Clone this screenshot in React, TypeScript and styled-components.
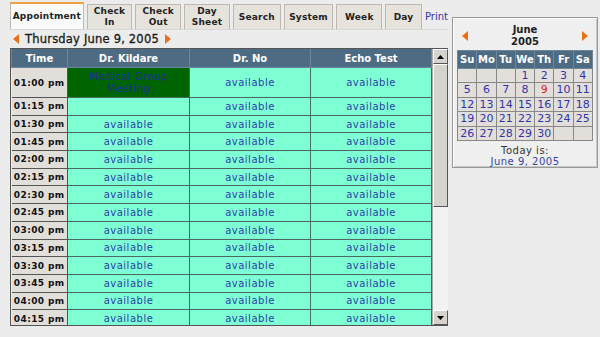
import styled, { createGlobalStyle } from "styled-components";

const GlobalStyle = createGlobalStyle`
  html, body {
    margin: 0;
    padding: 0;
    background: #ececec;
    font-family: "DejaVu Sans", Verdana, sans-serif;
  }
`;

const tabs = [
  { label: "Appointment", active: true, width: 74 },
  { label: "Check\nIn", width: 46 },
  { label: "Check\nOut", width: 46 },
  { label: "Day\nSheet", width: 46 },
  { label: "Search", width: 48 },
  { label: "System", width: 50 },
  { label: "Week", width: 46 },
  { label: "Day", width: 37 },
];

const times = [
  "01:15 pm",
  "01:30 pm",
  "01:45 pm",
  "02:00 pm",
  "02:15 pm",
  "02:30 pm",
  "02:45 pm",
  "03:00 pm",
  "03:15 pm",
  "03:30 pm",
  "03:45 pm",
  "04:00 pm",
  "04:15 pm",
];

const weeks: (number | null)[][] = [
  [null, null, null, 1, 2, 3, 4],
  [5, 6, 7, 8, 9, 10, 11],
  [12, 13, 14, 15, 16, 17, 18],
  [19, 20, 21, 22, 23, 24, 25],
  [26, 27, 28, 29, 30, null, null],
];

const Arrow = ({ dir }: { dir: "left" | "right" }) => (
  <svg width="6" height="10" viewBox="0 0 6 10">
    {dir === "left" ? (
      <polygon points="6,0 0,5 6,10" fill="#e8701a" />
    ) : (
      <polygon points="0,0 6,5 0,10" fill="#e8701a" />
    )}
  </svg>
);

export const App = () => {
  return (
    <Page>
      <GlobalStyle />
      <Main>
        <TabBar>
          {tabs.map((t) => (
            <Tab key={t.label} $active={t.active} $width={t.width}>
              {t.label}
            </Tab>
          ))}
          <PrintLink>Print</PrintLink>
        </TabBar>

        <DateRow>
          <Arrow dir="left" />
          <DateText>Thursday June 9, 2005</DateText>
          <Arrow dir="right" />
        </DateRow>

        <ScrollBox>
          <Schedule>
            <colgroup>
              <col style={{ width: 56 }} />
              <col style={{ width: 122 }} />
              <col style={{ width: 121 }} />
              <col />
            </colgroup>
            <thead>
              <tr>
                <Head>Time</Head>
                <Head>Dr. Kildare</Head>
                <Head>Dr. No</Head>
                <Head>Echo Test</Head>
              </tr>
            </thead>
            <tbody>
              <tr>
                <TimeCell $tall>01:00 pm</TimeCell>
                <Booked>Medical Group Meeting</Booked>
                <Slot>available</Slot>
                <Slot>available</Slot>
              </tr>
              {times.map((time) => (
                <tr key={time}>
                  <TimeCell>{time}</TimeCell>
                  <Slot>{time === "01:15 pm" ? "" : "available"}</Slot>
                  <Slot>available</Slot>
                  <Slot>available</Slot>
                </tr>
              ))}
            </tbody>
          </Schedule>
          <ScrollBar>
            <ScrollButton>
              <svg width="7" height="4" viewBox="0 0 7 4">
                <polygon points="0,4 3.5,0 7,4" fill="#000" />
              </svg>
            </ScrollButton>
            <Thumb />
            <Track />
            <ScrollButton>
              <svg width="7" height="4" viewBox="0 0 7 4">
                <polygon points="0,0 3.5,4 7,0" fill="#000" />
              </svg>
            </ScrollButton>
          </ScrollBar>
        </ScrollBox>
      </Main>

      <Calendar>
        <MonthRow>
          <Arrow dir="left" />
          <MonthTitle>
            June
            <br />
            2005
          </MonthTitle>
          <Arrow dir="right" />
        </MonthRow>
        <MonthGrid>
          <thead>
            <tr>
              {["Su", "Mo", "Tu", "We", "Th", "Fr", "Sa"].map((d) => (
                <DayHead key={d}>{d}</DayHead>
              ))}
            </tr>
          </thead>
          <tbody>
            {weeks.map((w, i) => (
              <tr key={i}>
                {w.map((d, j) => (
                  <DayCell key={j} $today={d === 9}>
                    {d ?? ""}
                  </DayCell>
                ))}
              </tr>
            ))}
          </tbody>
        </MonthGrid>
        <TodayLabel>Today is:</TodayLabel>
        <TodayDate>June 9, 2005</TodayDate>
      </Calendar>
    </Page>
  );
};

export default App;

const Page = styled.div`
  width: 600px;
  height: 337px;
  overflow: hidden;
  display: flex;
  align-items: flex-start;
  padding-left: 10px;
  box-sizing: border-box;
  gap: 4px;
`;

const Main = styled.div`
  width: 438px;
  display: flex;
  flex-direction: column;
`;

const TabBar = styled.div`
  display: flex;
  align-items: flex-end;
  gap: 3px;
  height: 29px;
  border-bottom: 1px solid #d8d8d8;
`;

const Tab = styled.div<{ $active?: boolean; $width: number }>`
  width: ${(p) => p.$width}px;
  height: ${(p) => (p.$active ? 27 : 25)}px;
  box-sizing: border-box;
  display: flex;
  align-items: center;
  justify-content: center;
  text-align: center;
  white-space: pre-line;
  font-size: 9px;
  font-weight: bold;
  letter-spacing: 0.2px;
  line-height: 11px;
  color: #222;
  background: ${(p) => (p.$active ? "#fbfbfb" : "#e6e2dc")};
  border: 1px solid #bdb9b2;
  border-top: ${(p) => (p.$active ? "2px solid #f0a040" : "1px solid #bdb9b2")};
  border-bottom: none;
`;

const PrintLink = styled.span`
  align-self: center;
  font-size: 10px;
  color: #3333aa;
  padding-top: 4px;
`;

const DateRow = styled.div`
  display: flex;
  align-items: center;
  gap: 6px;
  height: 17px;
  padding-left: 3px;
`;

const DateText = styled.span`
  font-size: 11.5px;
  letter-spacing: 0.2px;
  color: #1a1a1a;
  -webkit-text-stroke: 0.3px #1a1a1a;
`;

const ScrollBox = styled.div`
  display: flex;
  height: 276px;
  overflow: hidden;
  border: 1px solid #555;
  border-right: none;
  margin-top: 1px;
`;

const Schedule = styled.table`
  width: 422px;
  border-collapse: collapse;
  table-layout: fixed;
  font-size: 10px;
`;

const Head = styled.th`
  height: 18px;
  padding: 0;
  background: #4e6b84;
  color: #fff;
  font-weight: bold;
  font-size: 10px;
  border: 1px solid #6f8598;
  border-top: none;
`;

const TimeCell = styled.td<{ $tall?: boolean }>`
  height: ${(p) => (p.$tall ? 29 : 16.7)}px;
  padding: 0;
  background: #e2dfda;
  text-align: center;
  font-size: 9px;
  font-weight: bold;
  letter-spacing: 0.4px;
  color: #111;
  border: 1px solid #555;
  border-left: none;
`;

const Slot = styled.td`
  padding: 0;
  background: #7fffd4;
  text-align: center;
  color: #2b3fa8;
  letter-spacing: 0.5px;
  border: 1px solid #4b6a5f;
`;

const Booked = styled(Slot)`
  background: #006400;
  color: #1d2fa0;
  line-height: 12px;
  padding: 0 12px;
`;

const ScrollBar = styled.div`
  width: 15px;
  display: flex;
  flex-direction: column;
  background: #fff;
  border-left: 1px solid #aaa;
`;

const ScrollButton = styled.div`
  height: 15px;
  display: flex;
  align-items: center;
  justify-content: center;
  background: #d6d3ce;
  border: 1px solid;
  border-color: #fff #555 #555 #fff;
  box-sizing: border-box;
`;

const Thumb = styled.div`
  height: 143px;
  background: #d6d3ce;
  border: 1px solid;
  border-color: #fff #555 #555 #fff;
  box-sizing: border-box;
`;

const Track = styled.div`
  flex: 1;
  background: #f2f2f2;
`;

const Calendar = styled.div`
  margin-top: 17px;
  width: 146px;
  height: 151px;
  box-sizing: border-box;
  border: 1px solid #999;
  box-shadow: inset 1px 1px 0 #fff, inset -1px -1px 0 #c8c8c8;
  background: #efefef;
  display: flex;
  flex-direction: column;
  align-items: center;
  padding: 4px 4px 0;
`;

const MonthRow = styled.div`
  width: 100%;
  display: flex;
  align-items: center;
  justify-content: space-between;
  padding: 0 5px;
  box-sizing: border-box;
  height: 29px;
`;

const MonthTitle = styled.div`
  text-align: center;
  font-size: 10px;
  font-weight: bold;
  line-height: 12px;
  color: #222;
`;

const MonthGrid = styled.table`
  width: 136px;
  border-collapse: collapse;
  table-layout: fixed;
  border: 1px solid #777;
`;

const DayHead = styled.th`
  height: 17px;
  padding: 0;
  background: #4e6b84;
  color: #fff;
  font-size: 10px;
  font-weight: bold;
  border: 1px solid #6f8598;
`;

const DayCell = styled.td<{ $today?: boolean }>`
  height: 13.5px;
  padding: 0;
  text-align: center;
  background: #e2dfda;
  color: ${(p) => (p.$today ? "#e02020" : "#3333aa")};
  font-size: 11px;
  border: 1px solid #888;
`;

const TodayLabel = styled.div`
  margin-top: 4px;
  font-size: 10px;
  color: #333;
  letter-spacing: 0.5px;
`;

const TodayDate = styled.div`
  font-size: 10px;
  color: #3344aa;
  letter-spacing: 0.5px;
`;
